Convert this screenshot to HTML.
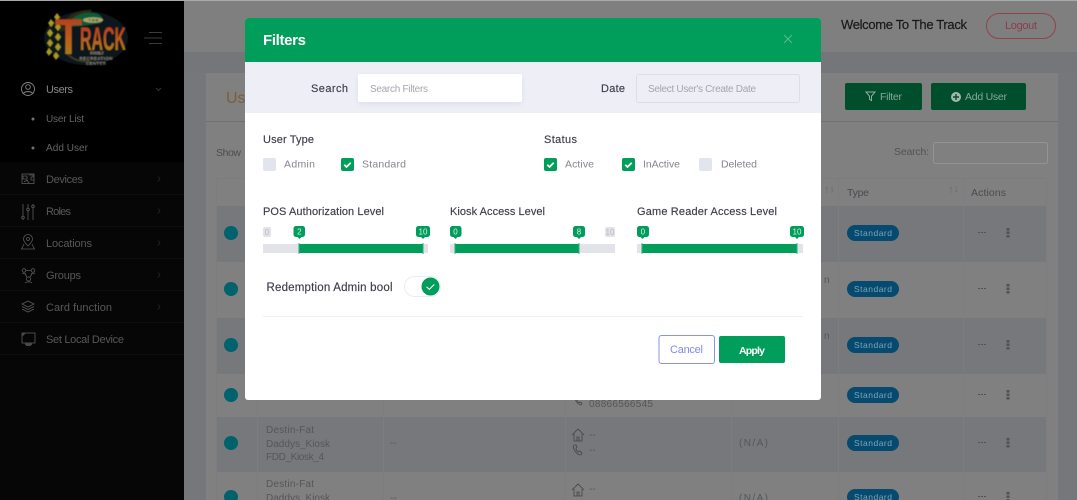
<!DOCTYPE html>
<html lang="en">
<head>
<meta charset="utf-8">
<title>Filters</title>
<style>
html,body{margin:0;padding:0;width:1077px;height:500px;overflow:hidden;background:#76777b}
svg{display:block;position:absolute;left:0;top:0}
text{font-family:"Liberation Sans",sans-serif;font-size:11px}
.m{stroke:currentColor;stroke-width:.15px}
.ic{fill:none;stroke:#5a5a5a;stroke-width:.8}
.ib{fill:none;stroke:#444;stroke-width:.8}
.nav{fill:#585858;font-size:11px}
.chev{fill:none;stroke:#262626;stroke-width:.8}
.cell{fill:#55565a;font-size:10px}
.badge{fill:#064a70}
.bt{fill:#7fa4b8;font-size:8.5px}
.lab{fill:#3c3d49;font-size:11px;stroke:#3c3d49;stroke-width:.15px}
.opt{fill:#85858e;font-size:10.5px}
.ph{fill:#a4a5ad;font-size:10px}
.pin{fill:#009d5b}
.pt{fill:#d5f0e3;font-size:8px;text-anchor:middle}
.gt{fill:#bcbdc2;font-size:8px;text-anchor:middle}
.ck{fill:none;stroke:#fff;stroke-width:1.8}
</style>
</head>
<body>
<svg width="1077" height="500" viewBox="0 0 1077 500" xmlns="http://www.w3.org/2000/svg">
<defs>
<linearGradient id="tr" x1="0" y1="0" x2="0" y2="1"><stop offset="0" stop-color="#b5301c"/><stop offset=".55" stop-color="#b8601a"/><stop offset="1" stop-color="#a08c18"/></linearGradient>
<filter id="sb"><feGaussianBlur stdDeviation=".45"/></filter>
<filter id="sh" x="-10%" y="-30%" width="120%" height="160%"><feGaussianBlur stdDeviation="3"/></filter>
</defs>

<!-- page background -->
<rect width="1077" height="500" fill="#76777b"/>
<rect x="184" y="0" width="893" height="52" fill="#7f7f7f"/>
<rect x="0" y="0" width="1077" height="1" fill="#a9a9a9"/>
<rect x="184" y="52" width="893" height="21" fill="#757679"/>

<!-- card -->
<rect x="206" y="73" width="852" height="427" fill="#808080"/>
<rect x="206" y="121" width="852" height="1" fill="#707173"/>
<text x="226" y="103" style="font-size:16px" fill="#7f5c38">Use</text>
<text x="216" y="156" textLength="25" fill="#4c4d4f" style="font-size:10.5px">Show</text>

<!-- table -->
<rect x="216" y="178" width="830" height="322" fill="#808080"/>
<rect x="216" y="178" width="830" height="1" fill="#7b7c7e"/>
<rect x="216" y="206" width="830" height="56" fill="#76787b"/>
<rect x="216" y="318" width="830" height="56" fill="#76787b"/>
<rect x="216" y="417" width="830" height="55" fill="#76787b"/>
<g fill="#7c7d7f">
<rect x="216" y="178" width="1" height="322"/><rect x="1046" y="178" width="1" height="322"/>
<rect x="257" y="178" width="1" height="322"/><rect x="383" y="178" width="1" height="322"/>
<rect x="565" y="178" width="1" height="322"/><rect x="731" y="178" width="1" height="322"/>
<rect x="838" y="178" width="1" height="322"/><rect x="963" y="178" width="1" height="322"/>
</g>
<g fill="#00626c">
<circle cx="231" cy="233" r="7"/><circle cx="231" cy="289" r="7"/><circle cx="231" cy="345" r="7"/>
<circle cx="231" cy="395" r="7"/><circle cx="231" cy="443" r="7"/><circle cx="231" cy="497" r="7"/>
</g>

<!-- table text visible under modal edges -->
<text class="cell" x="266" y="433" textLength="48">Destin-Fat</text>
<text class="cell" x="266" y="447" textLength="64">Daddys_Kiosk</text>
<text class="cell" x="266" y="460" textLength="58">FDD_Kiosk_4</text>
<text class="cell" x="266" y="487" textLength="48">Destin-Fat</text>
<text class="cell" x="266" y="501" textLength="64">Daddys_Kiosk</text>
<text class="cell" x="390" y="446">--</text>
<text class="cell" x="390" y="501">--</text>
<text class="cell" x="739" y="446" textLength="29">(N/A)</text>
<text class="cell" x="739" y="501" textLength="29">(N/A)</text>
<text class="cell" x="589" y="407" textLength="64">08866566545</text>
<text class="cell" x="589" y="438">--</text>
<text class="cell" x="589" y="453">--</text>
<text class="cell" x="589" y="492">--</text>
<path class="ib" d="M572 435l6-6 6 6M574 434v7h8v-7M577 441v-4h2v4"/>
<path class="ib" d="M572 490l6-6 6 6M574 489v7h8v-7M577 496v-4h2v4"/>
<path class="ib" d="M574 445c-1 1-1 3 1 6s4 4 6 4l1-2-2-2-2 1c-1-1-2-2-2-4l1-1-1-2z"/>
<path class="ib" d="M576 397c-1 1-1 2 0 4s3 4 5 4l1-2-2-1-1 1c-1-1-2-2-2-3l1-1-1-2z"/>
<text class="cell" x="824" y="283">n</text>
<text class="cell" x="824" y="339">n</text>

<!-- right column -->
<text x="841" y="29" textLength="126" fill="#1d1d1f" class="m" style="font-size:13px">Welcome To The Track</text>
<rect x="986.5" y="13.5" width="69" height="25" rx="12.5" fill="none" stroke="#93434f"/>
<text x="1005" y="29" textLength="32" fill="#8e3c4e" style="font-size:11px">Logout</text>

<rect x="845" y="83" width="77" height="27" rx="2" fill="#014e2d"/>
<rect x="931" y="83" width="95" height="27" rx="2" fill="#014e2d"/>
<path d="M866 92h9l-3.500 4.200v4.300l-2-1.200v-3.100z" fill="none" stroke="#8fae9f" stroke-width="1"/>
<text x="880" y="100" textLength="22" fill="#86a898" style="font-size:10.5px">Filter</text>
<circle cx="956" cy="97" r="5" fill="#a5b6ad"/>
<path d="M953 97h6M956 94v6" stroke="#014e2d" stroke-width="1.4"/>
<text x="965" y="100" textLength="42" fill="#86a898" style="font-size:10.5px">Add User</text>

<text x="894" y="155" textLength="35" fill="#525355" style="font-size:10.5px">Search:</text>
<rect x="933.5" y="142.5" width="114" height="21" rx="2" fill="#808080" stroke="#939497"/>
<text x="847" y="196" textLength="22" fill="#4a4b4d" style="font-size:10.5px">Type</text>
<text x="971" y="196" textLength="35" fill="#4a4b4d" style="font-size:10.5px">Actions</text>
<path d="M827 193v-6l-1.500 1.500M832 186v6l1.500-1.500" fill="none" stroke="#6c6d6f" stroke-width=".7"/>
<path d="M951 193v-6l-1.500 1.500M956 186v6l1.500-1.500" fill="none" stroke="#6c6d6f" stroke-width=".7"/>

<g>
<rect class="badge" x="847" y="225" width="52" height="16" rx="8"/><text class="bt" x="854" y="236" textLength="38">Standard</text>
<rect class="badge" x="847" y="281" width="52" height="16" rx="8"/><text class="bt" x="854" y="292" textLength="38">Standard</text>
<rect class="badge" x="847" y="337" width="52" height="16" rx="8"/><text class="bt" x="854" y="348" textLength="38">Standard</text>
<rect class="badge" x="847" y="387" width="52" height="16" rx="8"/><text class="bt" x="854" y="398" textLength="38">Standard</text>
<rect class="badge" x="847" y="435" width="52" height="16" rx="8"/><text class="bt" x="854" y="446" textLength="38">Standard</text>
<rect class="badge" x="847" y="489" width="52" height="16" rx="8"/><text class="bt" x="854" y="500" textLength="38">Standard</text>
</g>
<g fill="#515254">
<g><rect x="978" y="232" width="2" height="1"/><rect x="981" y="232" width="2" height="1"/><rect x="984" y="232" width="2" height="1"/><rect x="1006.5" y="228" width="3" height="2.5"/><rect x="1006.5" y="231.5" width="3" height="2.5"/><rect x="1006.5" y="235" width="3" height="2.5"/></g>
<g transform="translate(0,56)"><rect x="978" y="232" width="2" height="1"/><rect x="981" y="232" width="2" height="1"/><rect x="984" y="232" width="2" height="1"/><rect x="1006.5" y="228" width="3" height="2.5"/><rect x="1006.5" y="231.5" width="3" height="2.5"/><rect x="1006.5" y="235" width="3" height="2.5"/></g>
<g transform="translate(0,112)"><rect x="978" y="232" width="2" height="1"/><rect x="981" y="232" width="2" height="1"/><rect x="984" y="232" width="2" height="1"/><rect x="1006.5" y="228" width="3" height="2.5"/><rect x="1006.5" y="231.5" width="3" height="2.5"/><rect x="1006.5" y="235" width="3" height="2.5"/></g>
<g transform="translate(0,162)"><rect x="978" y="232" width="2" height="1"/><rect x="981" y="232" width="2" height="1"/><rect x="984" y="232" width="2" height="1"/><rect x="1006.5" y="228" width="3" height="2.5"/><rect x="1006.5" y="231.5" width="3" height="2.5"/><rect x="1006.5" y="235" width="3" height="2.5"/></g>
<g transform="translate(0,210)"><rect x="978" y="232" width="2" height="1"/><rect x="981" y="232" width="2" height="1"/><rect x="984" y="232" width="2" height="1"/><rect x="1006.5" y="228" width="3" height="2.5"/><rect x="1006.5" y="231.5" width="3" height="2.5"/><rect x="1006.5" y="235" width="3" height="2.5"/></g>
<g transform="translate(0,264)"><rect x="978" y="232" width="2" height="1"/><rect x="981" y="232" width="2" height="1"/><rect x="984" y="232" width="2" height="1"/><rect x="1006.5" y="228" width="3" height="2.5"/><rect x="1006.5" y="231.5" width="3" height="2.5"/><rect x="1006.5" y="235" width="3" height="2.5"/></g>
</g>

<!-- sidebar -->
<rect x="0" y="1" width="184" height="499" fill="#000"/>
<rect x="0" y="162" width="184" height="338" fill="#060606"/>
<g fill="#0e0e0e">
<rect y="194" width="184" height="1"/><rect y="226" width="184" height="1"/><rect y="258" width="184" height="1"/>
<rect y="290" width="184" height="1"/><rect y="322" width="184" height="1"/><rect y="354" width="184" height="1"/>
</g>

<!-- logo -->
<g filter="url(#sb)">
<ellipse cx="86" cy="38" rx="42" ry="27" fill="#0a141c"/>
<path d="M60 32c2-15 17-23 32-22l-2 3c-11 0-20 6-24 17z" fill="#2a2a18"/>
<path d="M66 27c3-9 16-16 28-14 7 1 10 5 7 10l-20 3z" fill="#0b5c34"/>
<ellipse cx="93" cy="20" rx="10" ry="2.8" fill="#a9a46e"/>
<text x="88.500" y="21.500" textLength="10" fill="#1a1a1a" style="font-size:4px;font-weight:bold">THE</text>
<path d="M66 52c6 8 14 10 24 9" fill="none" stroke="#3a3a20" stroke-width="2"/>
<g fill="#a89a1a">
<path d="M57 13l3 4-3 4-3-4zM51 19l3 4-3 4-3-4zM58 23l3 4-3 4-3-4zM50 29l3 4-3 4-3-4zM58 33l3 4-3 4-3-4zM50 39l3 4-3 4-3-4zM58 43l3 4-3 4-3-4zM49 48l3 4-3 4-3-4zM56 52l3 4-3 4-3-4z"/>
</g>
<text x="55" y="54" textLength="27" lengthAdjust="spacingAndGlyphs" fill="url(#tr)" style="font-size:50px;font-weight:bold;font-family:'Liberation Sans',sans-serif">T</text>
<text x="80" y="50" textLength="46" lengthAdjust="spacingAndGlyphs" fill="url(#tr)" style="font-size:32px;font-weight:bold;font-family:'Liberation Sans',sans-serif">RACK</text>
<g fill="#85857a" text-anchor="middle">
<text x="97" y="54.500" style="font-size:4.500px;font-weight:bold" textLength="14">FAMILY</text>
<text x="96" y="60" style="font-size:4.500px;font-weight:bold" textLength="33">RECREATION</text>
<text x="96" y="65" style="font-size:4.500px;font-weight:bold" textLength="20">CENTER</text>
</g>
</g>

<!-- hamburger -->
<g fill="none" stroke="#3b3b3b" stroke-width="1">
<path d="M149 32.5h13M144 38h18M149 43.5h13"/>
</g>

<!-- nav -->
<g style="stroke:#858585" fill="none" stroke-width=".9">
<circle cx="28" cy="89" r="6.500"/>
<circle cx="28" cy="87" r="2.300"/>
<path d="M23.500 93.500c1-2.500 8-2.500 9 0"/>
</g>
<text x="46" y="93" textLength="27" fill="#888" style="font-size:11px">Users</text>
<path d="M156 88l2.500 2.500 2.500-2.500" fill="none" stroke="#3f3f3f" stroke-width=".8"/>
<circle cx="33" cy="119" r="1.500" fill="#707070"/>
<circle cx="33" cy="148" r="1.500" fill="#707070"/>
<text x="46" y="122" textLength="38" fill="#646464" style="font-size:10px">User List</text>
<text x="46" y="151" textLength="42" fill="#646464" style="font-size:10px">Add User</text>

<text class="nav" x="46" y="183" textLength="37">Devices</text>
<text class="nav" x="46" y="215" textLength="25">Roles</text>
<text class="nav" x="46" y="247" textLength="46">Locations</text>
<text class="nav" x="46" y="279" textLength="35">Groups</text>
<text class="nav" x="46" y="311" textLength="66">Card function</text>
<text class="nav" x="46" y="343" textLength="78">Set Local Device</text>
<g class="chev">
<path d="M158 176.500l2 2.500-2 2.500"/><path d="M158 208.500l2 2.500-2 2.500"/><path d="M158 240.500l2 2.500-2 2.500"/>
<path d="M158 272.500l2 2.500-2 2.500"/><path d="M158 304.500l2 2.500-2 2.500"/>
</g>
<!-- devices -->
<rect x="22" y="174" width="12" height="9.500" class="ic"/>
<path d="M23 176h4v3h-4zM29 175h4v2h-2v3h3M24 182l3-2 2 3" fill="none" stroke="#5a5a5a" stroke-width=".8"/>
<!-- roles -->
<path class="ic" d="M23 204v12M23 219v1M28 204v4M28 211v9M33 204v1M33 208v12"/>
<circle class="ic" cx="23" cy="217.500" r="1.300"/><circle class="ic" cx="28" cy="209.500" r="1.300"/><circle class="ic" cx="33" cy="206.500" r="1.300"/>
<!-- locations -->
<path class="ic" d="M28 246c-3-3-4.500-5-4.500-7a4.500 4.500 0 0 1 9 0c0 2-1.500 4-4.500 7z"/>
<circle class="ic" cx="28" cy="239" r="1.500"/>
<path class="ic" d="M24 244l-2.500 5h13l-2.500-5"/>
<!-- groups -->
<circle class="ic" cx="24" cy="270.500" r="1.800"/><circle class="ic" cx="33" cy="270.500" r="1.800"/><circle class="ic" cx="28.500" cy="279" r="2"/>
<path class="ic" d="M26 270.500h5M22 274c1-1 3-1 4 0M31 274c1-1 3-1 4 0M25 283c1-1.500 6-1.500 7 0M25 274l2 3M32 274l-2 3"/>
<!-- cards -->
<path class="ic" d="M28 301l6 3-6 3-6-3zM22 306.500l6 3 6-3M22 309l6 3 6-3"/>
<!-- local device -->
<rect x="22" y="333" width="13" height="10" class="ic"/>
<path d="M22 333l4 0-4 4z" fill="#484848"/>
<path class="ic" d="M26 345.500h5"/>
<rect x="25" y="343" width="7" height="2" fill="#484848"/>

<!-- modal -->
<rect x="245" y="18" width="576" height="382" rx="3" fill="#fff"/>
<path d="M245 62V21a3 3 0 0 1 3-3h570a3 3 0 0 1 3 3v41z" fill="#009d5b"/>
<rect x="245" y="62" width="576" height="51" fill="#eeeff6"/>
<text x="263" y="45" textLength="43" fill="#fff" style="font-size:15px;font-weight:bold">Filters</text>
<path d="M784 35l8 8M792 35l-8 8" stroke="#5cb892" stroke-width="1" fill="none"/>

<text class="lab" x="311" y="92" textLength="37">Search</text>
<rect x="358" y="76" width="164" height="28" rx="3" fill="#c9cbdc" opacity=".5" filter="url(#sh)"/>
<rect x="358" y="74" width="164" height="28" rx="2" fill="#fff"/>
<text class="ph" x="370" y="92" textLength="58">Search Filters</text>
<text class="lab" x="601" y="92" textLength="24">Date</text>
<rect x="636.5" y="74.500" width="163" height="28" rx="2" fill="#eeeff6" stroke="#dddee6"/>
<text class="ph" x="648" y="92" textLength="108">Select User's Create Date</text>

<text class="lab" x="263" y="143" textLength="51">User Type</text>
<text class="lab" x="544" y="143" textLength="33">Status</text>

<rect x="263" y="158" width="13" height="13" rx="2" fill="#e3e5ee"/>
<text class="opt" x="284" y="167.500" textLength="31">Admin</text>
<rect x="341" y="158" width="13" height="13" rx="2" fill="#009d5b"/>
<path class="ck" d="M344.300 164.800l2.200 2.200 4.200-4.200"/>
<text class="opt" x="362" y="167.500" textLength="44">Standard</text>
<rect x="544" y="158" width="13" height="13" rx="2" fill="#009d5b"/>
<path class="ck" d="M547.300 164.800l2.200 2.200 4.200-4.200"/>
<text class="opt" x="565" y="167.500" textLength="29">Active</text>
<rect x="622" y="158" width="13" height="13" rx="2" fill="#009d5b"/>
<path class="ck" d="M625.300 164.800l2.200 2.200 4.200-4.200"/>
<text class="opt" x="643" y="167.500" textLength="37">InActive</text>
<rect x="699" y="158" width="13" height="13" rx="2" fill="#e3e5ee"/>
<text class="opt" x="721" y="167.500" textLength="36">Deleted</text>

<text class="lab" x="263" y="215" textLength="121">POS Authorization Level</text>
<text class="lab" x="450" y="215" textLength="95">Kiosk Access Level</text>
<text class="lab" x="637" y="215" textLength="140">Game Reader Access Level</text>

<!-- sliders -->
<rect x="263" y="244" width="165" height="9" fill="#e2e3e8"/>
<rect x="299" y="244" width="124" height="9" fill="#009d5b"/>
<rect x="450" y="244" width="165" height="9" fill="#e2e3e8"/>
<rect x="455" y="244" width="124" height="9" fill="#009d5b"/>
<rect x="637" y="244" width="166" height="9" fill="#e2e3e8"/>
<rect x="642" y="244" width="155" height="9" fill="#009d5b"/>
<g fill="#2fae79">
<rect x="298.500" y="243" width="1" height="11"/><rect x="422.500" y="243" width="1" height="11"/>
<rect x="454.500" y="243" width="1" height="11"/><rect x="578.500" y="243" width="1" height="11"/>
<rect x="641.500" y="243" width="1" height="11"/><rect x="796.500" y="243" width="1" height="11"/>
</g>
<!-- pins -->
<rect x="263" y="227" width="8" height="10" rx="2" fill="#e2e3e8"/><text class="gt" x="267" y="235">0</text>
<rect x="605" y="227" width="10" height="10" rx="2" fill="#e2e3e8"/><text class="gt" x="610" y="235">10</text>
<g>
<rect class="pin" x="293.500" y="226" width="11.500" height="11" rx="2.500"/><path class="pin" d="M297 236.500h5l-2.500 2.500z"/><text class="pt" x="299.300" y="234.500">2</text>
<rect class="pin" x="416" y="226" width="14" height="11" rx="2.500"/><path class="pin" d="M420.500 236.500h5l-2.500 2.500z"/><text class="pt" x="423" y="234.500">10</text>
<rect class="pin" x="450" y="226" width="11.500" height="11" rx="2.500"/><path class="pin" d="M453 236.500h5l-2.500 2.500z"/><text class="pt" x="455.500" y="234.500">0</text>
<rect class="pin" x="573" y="226" width="12" height="11" rx="2.500"/><path class="pin" d="M576.500 236.500h5l-2.500 2.500z"/><text class="pt" x="579" y="234.500">8</text>
<rect class="pin" x="637" y="226" width="12" height="11" rx="2.500"/><path class="pin" d="M640 236.500h5l-2.500 2.500z"/><text class="pt" x="642.800" y="234.500">0</text>
<rect class="pin" x="790" y="226" width="14" height="11" rx="2.500"/><path class="pin" d="M794.500 236.500h5l-2.500 2.500z"/><text class="pt" x="797" y="234.500">10</text>
</g>

<text class="lab" x="266.500" y="291" textLength="126" style="font-size:11.5px">Redemption Admin bool</text>
<rect x="404.500" y="276.500" width="36" height="20" rx="10" fill="#fff" stroke="#ebecf3"/>
<circle cx="430.500" cy="286.500" r="9" fill="#009d5b"/>
<path d="M426.500 286.800l2.800 2.600 5-5" fill="none" stroke="#fff" stroke-width="1"/>

<rect x="263" y="316" width="540" height="1" fill="#eef0f3"/>

<rect x="659" y="335.500" width="55.500" height="28" rx="2.500" fill="#fff" stroke="#8a92e6"/>
<text x="670" y="353" textLength="33" fill="#838be6" style="font-size:11px">Cancel</text>
<rect x="719" y="336" width="66" height="27" rx="2" fill="#009d5b"/>
<text x="739" y="354" textLength="26" fill="#ffffff" style="font-size:10.5px;font-weight:bold">Apply</text>
</svg>
</body>
</html>
